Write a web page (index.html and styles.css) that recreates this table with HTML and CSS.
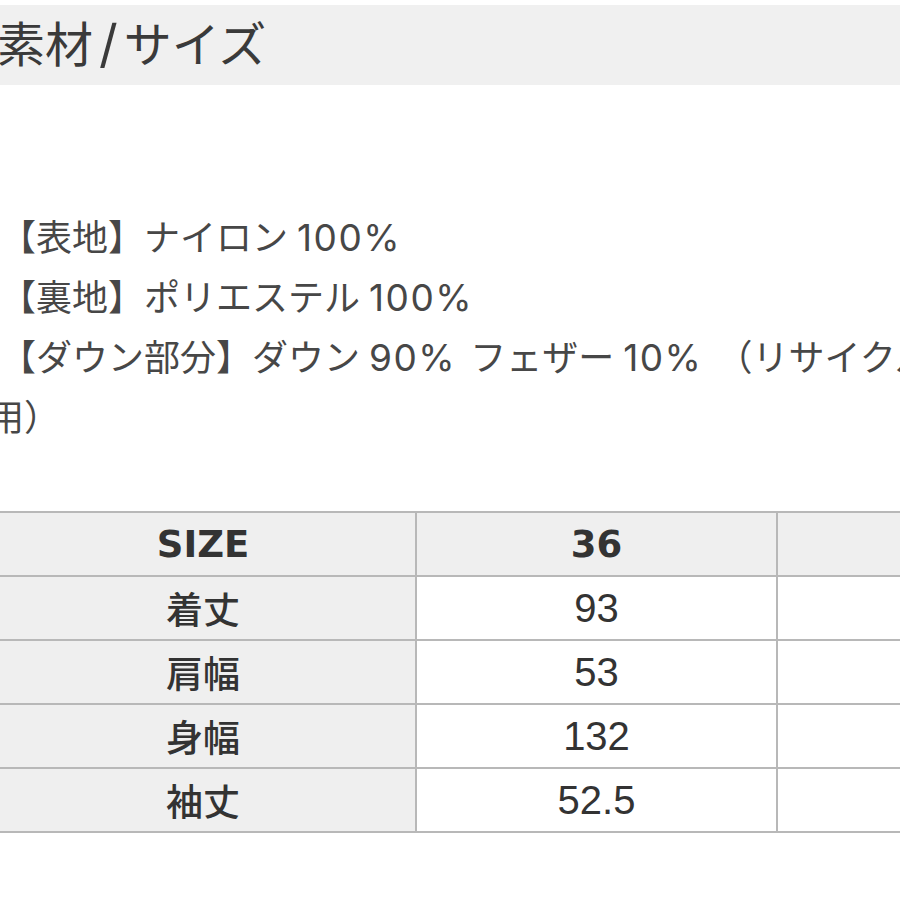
FILE: index.html
```html
<!DOCTYPE html>
<html lang="ja">
<head>
<meta charset="utf-8">
<title>素材/サイズ</title>
<link rel="stylesheet" href="styles.css">
</head>
<body>
<div class="page">
  <div class="title-bar"><h1 class="title">素材<span class="slash">/</span>サイズ</h1></div>
  <div class="materials">
    <p class="line">【表地】ナイロン<span class="num">100%</span></p>
    <p class="line">【裏地】ポリエステル<span class="num">100%</span></p>
    <p class="line">【ダウン部分】ダウン<span class="num">90%</span>フェザー<span class="num">10%</span>（リサイクルダウン使<br>用）</p>
  </div>
  <table class="size-table">
    <colgroup>
      <col class="c-label">
      <col class="c-val">
      <col class="c-val">
    </colgroup>
    <thead>
      <tr><th class="head">SIZE</th><th class="head">36</th><th class="head">38</th></tr>
    </thead>
    <tbody>
      <tr><th class="label">着丈</th><td class="val">93</td><td class="val">95</td></tr>
      <tr><th class="label">肩幅</th><td class="val">53</td><td class="val">55</td></tr>
      <tr><th class="label">身幅</th><td class="val">132</td><td class="val">136</td></tr>
      <tr><th class="label">袖丈</th><td class="val">52.5</td><td class="val">54</td></tr>
    </tbody>
  </table>
</div>
</body>
</html>
```
FILE: styles.css
```css
html, body {
  margin: 0;
  padding: 0;
  background: #ffffff;
  overflow: hidden;
}
.page {
  width: 900px;
  height: 900px;
  overflow: hidden;
  padding-top: 5px;
  box-sizing: border-box;
  font-family: "Noto Sans CJK JP", "Noto Sans", sans-serif;
}
.title-bar {
  height: 80px;
  background: #f0f0f0;
  display: flex;
  align-items: center;
}
.title {
  margin: -4px 0 0 -3px;
  font-size: 48px;
  font-weight: 400;
  color: #3a3a3a;
  line-height: 1;
}
.slash {
  font-family: "Inter", "Liberation Sans", sans-serif;
  font-size: 52px;
  line-height: 1;
  padding: 0 6px;
}
.materials {
  margin: 120px 0 0 -12px;
  width: 1300px;
}
.line {
  margin: 0;
  height: 60px;
  font-size: 36px;
  line-height: 60px;
  color: #474747;
  white-space: nowrap;
  text-indent: 12px;
}
.line:last-child {
  height: auto;
}
.num {
  font-family: "Inter", "DejaVu Sans", sans-serif;
  font-weight: 400;
  font-size: 37px;
  line-height: 1;
  letter-spacing: 1.5px;
  padding: 0 14px 0 9px;
}
.size-table {
  margin: 66px 0 0 -11px;
  border-collapse: collapse;
  table-layout: fixed;
  width: 1148px;
}
.c-label { width: 426px; }
.c-val { width: 361px; }
.size-table th,
.size-table td {
  border: 2px solid #b8b8b8;
  height: 64px;
  padding: 0;
  text-align: center;
  vertical-align: middle;
  color: #333333;
  box-sizing: border-box;
}
.head {
  background: #efefef;
  font-family: "DejaVu Sans", sans-serif;
  font-weight: 700;
  font-size: 37px;
  color: #2e2e2e;
}
.label {
  background: #efefef;
  font-family: "Noto Sans CJK JP", sans-serif;
  font-weight: 500;
  font-size: 37px;
}
.val {
  background: #ffffff;
  font-family: "Liberation Sans", Arial, sans-serif;
  font-weight: 400;
  font-size: 40px;
}
```
